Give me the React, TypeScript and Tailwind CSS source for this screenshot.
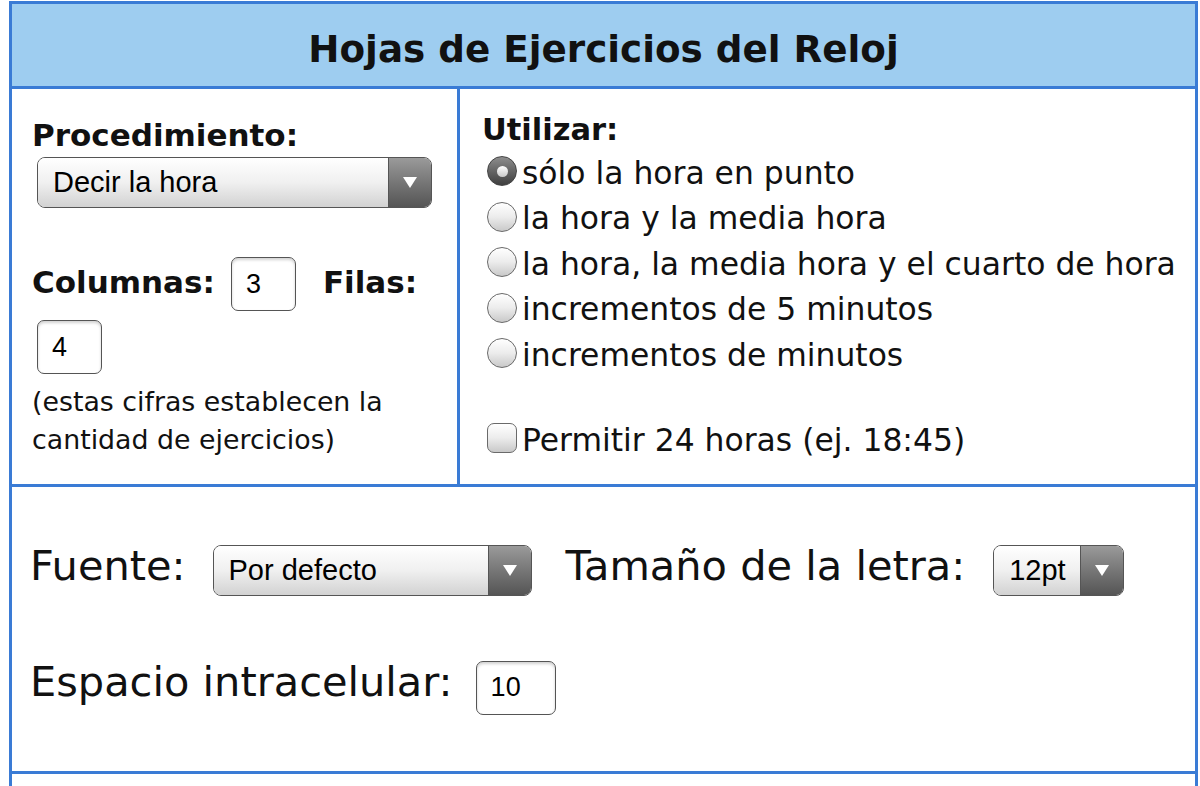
import React from "react";

function Select({ value, width }: { value: string; width: string }) {
  return (
    <div
      className={`flex items-baseline h-[51px] ${width} rounded-[8px] border-[1.5px] border-[#555] overflow-hidden font-['Liberation_Sans',Arial,sans-serif] text-[29px] text-black`}
    >
      <span className="flex-1 self-stretch flex items-center pl-[15px] bg-linear-to-b from-white via-[#f0f0f0] to-[#d2d2d2] leading-[33px]">
        {value}
      </span>
      <span className="w-[43px] self-stretch flex items-center justify-center border-l border-[#555] bg-linear-to-b from-[#9a9a9a] to-[#555]">
        <svg width="14" height="11" viewBox="0 0 14 11">
          <path d="M0 0 L14 0 L7 11 Z" fill="#fff" />
        </svg>
      </span>
    </div>
  );
}

function NumInput({ value, width }: { value: string; width: string }) {
  return (
    <div
      className={`flex items-center h-[54px] ${width} rounded-[7px] border-[1.5px] border-[#555] bg-white shadow-[inset_0_2px_3px_rgba(0,0,0,0.18)] pl-[14px] font-['Liberation_Sans',Arial,sans-serif] text-[27px] leading-[31px] text-black`}
    >
      {value}
    </div>
  );
}

function Radio({ checked }: { checked?: boolean }) {
  if (checked) {
    return (
      <span className="mt-[5.5px] ml-[5px] mr-[5px] w-[30px] h-[30px] shrink-0 rounded-full border border-[#444] bg-linear-to-b from-[#8e8e8e] to-[#3f3f3f] flex items-center justify-center">
        <span className="w-[11px] h-[11px] rounded-full bg-linear-to-b from-white to-[#c8c8c8]" />
      </span>
    );
  }
  return (
    <span className="mt-[5.5px] ml-[5px] mr-[5px] w-[30px] h-[30px] shrink-0 rounded-full border-[1.5px] border-[#6a6a6a] bg-linear-to-b from-white via-[#ececec] to-[#c9c9c9]" />
  );
}

const options = [
  "sólo la hora en punto",
  "la hora y la media hora",
  "la hora, la media hora y el cuarto de hora",
  "incrementos de 5 minutos",
  "incrementos de minutos",
];

export default function App() {
  return (
    <div className="min-h-[786px] bg-white pt-[1px] pl-[9px] pr-[2px] font-['DejaVu_Sans',Verdana,sans-serif] text-[#111]">
      <div className="border-x-[3px] border-t-[3px] border-[#3a7bd5]">
        {/* header */}
        <div className="h-[85px] pt-[24px] bg-[#9ecdf0] border-b-[3px] border-[#3a7bd5] text-center">
          <h1 className="font-bold text-[37.3px] leading-[43px]">Hojas de Ejercicios del Reloj</h1>
        </div>

        {/* settings */}
        <div className="grid grid-cols-[448px_1fr] h-[398px] border-b-[3px] border-[#3a7bd5]">
          <div className="border-r-[3px] border-[#3a7bd5] pl-[20px] pt-[28px]">
            <div className="font-bold text-[31px] leading-[36px]">Procedimiento:</div>
            <div className="mt-[4px] ml-[5px]">
              <Select value="Decir la hora" width="w-[395px]" />
            </div>
            <div className="mt-[49px] flex items-baseline">
              <span className="font-bold text-[31px] leading-[36px]">Columnas:</span>
              <div className="ml-[16px]">
                <NumInput value="3" width="w-[65px]" />
              </div>
              <span className="ml-[27px] font-bold text-[31px] leading-[36px]">Filas:</span>
            </div>
            <div className="mt-[9px] ml-[5px]">
              <NumInput value="4" width="w-[65px]" />
            </div>
            <p className="mt-[9px] text-[26.8px] leading-[38px]">
              (estas cifras establecen la
              <br />
              cantidad de ejercicios)
            </p>
          </div>

          <div className="pl-[22px] pt-[23px]">
            <div className="font-bold text-[30.5px] leading-[35px]">Utilizar:</div>
            <div className="mt-[3.5px]">
              {options.map((o, i) => (
                <div key={o} className="flex items-start h-[45.5px] text-[31.4px] leading-[45.5px] whitespace-nowrap">
                  <Radio checked={i === 0} />
                  <span>{o}</span>
                </div>
              ))}
              <div className="mt-[40px] flex items-start h-[45.5px] text-[31.4px] leading-[45.5px] whitespace-nowrap">
                <span className="mt-[5px] ml-[5px] mr-[5px] w-[30px] h-[30px] shrink-0 rounded-[7px] border-[1.5px] border-[#6a6a6a] bg-linear-to-b from-white via-[#ececec] to-[#c9c9c9]" />
                <span>Permitir 24 horas (ej. 18:45)</span>
              </div>
            </div>
          </div>
        </div>

        {/* layout */}
        <div className="h-[287px] pl-[18px] pt-[55px] border-b-[3px] border-[#3a7bd5] text-[41.5px]">
          <div className="flex items-baseline">
            <span className="leading-[48px]">Fuente:</span>
            <div className="ml-[27px]">
              <Select value="Por defecto" width="w-[319px]" />
            </div>
            <span className="ml-[34px] leading-[48px]">Tamaño de la letra:</span>
            <div className="ml-[28px]">
              <Select value="12pt" width="w-[131px]" />
            </div>
          </div>
          <div className="mt-[62px] flex items-baseline">
            <span className="leading-[48px]">Espacio intracelular:</span>
            <div className="ml-[23px]">
              <NumInput value="10" width="w-[80px]" />
            </div>
          </div>
        </div>

        <div className="h-[40px]" />
      </div>
    </div>
  );
}
